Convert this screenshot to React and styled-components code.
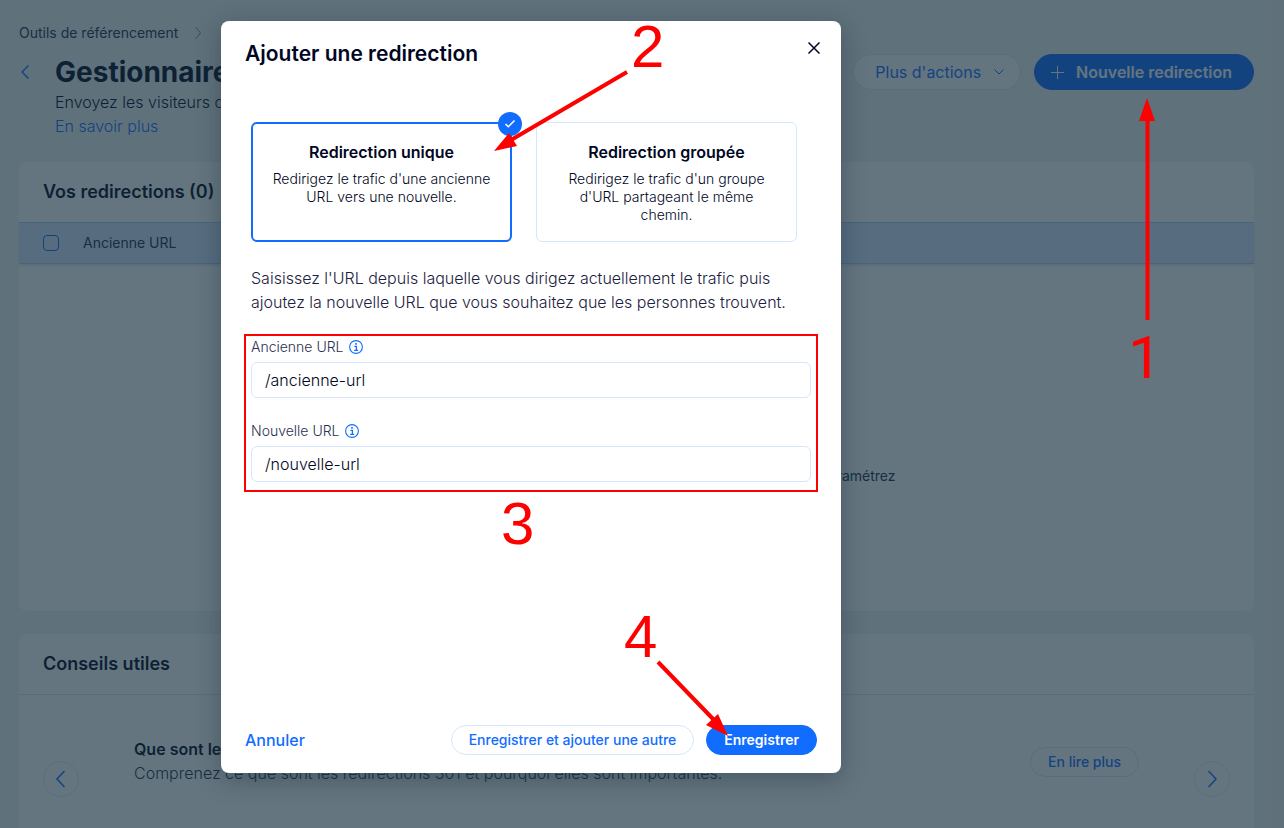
import React from "react";
import styled, { createGlobalStyle, css } from "styled-components";

const GlobalStyle = createGlobalStyle`
  *, *::before, *::after { box-sizing: border-box; }
  body {
    margin: 0;
    background: #eef2f4;
    color: #000624;
    font-family: Inter, "Liberation Sans", sans-serif;
    font-size: 16px;
    font-weight: 300;
    line-height: 24px;
  }
  h1, h2, h3, p { margin: 0; }
  button, input { font: inherit; color: inherit; }
  a { text-decoration: none; }
  svg { display: block; flex: none; }
`;

const Screen = styled.div`
  position: relative;
  min-height: 100vh;
  overflow: hidden;
`;

const Page = styled.main`
  height: 100vh;
  overflow: hidden;
  padding: 24px 30px 0 19px;
`;

const Breadcrumbs = styled.nav`
  display: flex;
  align-items: center;
  gap: 16px;
  font-size: 14px;
  font-weight: 400;
  line-height: 18px;
  color: #20304f;
  a { color: inherit; }
  svg { color: #7a92a5; }
`;

const PageHeader = styled.header`
  display: flex;
  align-items: flex-start;
  margin: 12px 0 24px;
`;

const BackButton = styled.button`
  width: 36px;
  height: 36px;
  padding: 0;
  border: 0;
  background: none;
  color: #116dff;
`;

const Heading = styled.div`
  flex: 1;
  a { color: #116dff; }
`;

const PageTitle = styled.h1`
  font-size: 28px;
  line-height: 36px;
  font-weight: 700;
`;

const Actions = styled.div`
  display: flex;
  gap: 13px;
`;

const looks = {
  primary: css`
    background: #116dff;
    border-color: #116dff;
    color: #fff;
    font-weight: 600;
  `,
  secondary: css`
    background: #fff;
    border-color: #d6e6fe;
    color: #116dff;
    font-weight: 500;
  `,
};

const Pill = styled.button`
  display: inline-flex;
  align-items: center;
  justify-content: center;
  height: 30px;
  padding: 0 17px;
  border: 1px solid;
  border-radius: 18px;
  font-size: 14px;
  white-space: nowrap;
  ${(p) => looks[p.$look]}
`;

const HeaderPill = styled(Pill)`
  gap: 12px;
  height: 36px;
  padding: ${(p) => (p.$look === "primary" ? "0 21px 0 15px" : "0 15px 0 21px")};
  font-size: 16px;
  font-weight: ${(p) => (p.$look === "primary" ? 600 : 400)};
`;

const Card = styled.section`
  min-height: ${(p) => p.$height}px;
  margin-bottom: 23px;
  border-radius: 8px;
  background: #fff;
`;

const CardTitle = styled.h2`
  padding: 18px 24px;
  border-bottom: ${(p) => (p.$ruled ? "1px solid #dfe5eb" : "0")};
  font-size: 18px;
  line-height: 24px;
  font-weight: 600;
`;

const Table = styled.table`
  width: 100%;
  border-collapse: collapse;
  box-shadow: 0 2px 2px rgba(22, 45, 61, 0.1);
  th {
    height: 41px;
    padding: 0;
    border: solid #a8caff;
    border-width: 1px 0;
    background: #d6e6fe;
    color: #20304f;
    font-size: 14px;
    font-weight: 400;
    text-align: left;
  }
  th:first-child { width: 64px; padding-left: 24px; }
`;

const Checkbox = styled.input`
  display: block;
  appearance: none;
  width: 16px;
  height: 16px;
  margin: 0;
  border: 1px solid #116dff;
  border-radius: 4px;
`;

const EmptyState = styled.p`
  width: 518px;
  margin: 200px auto 0;
  color: #20304f;
  font-size: 14px;
  font-weight: 400;
  text-align: right;
`;

const Tip = styled.div`
  display: flex;
  align-items: flex-start;
  padding: 42px 24px 0;
`;

const TipText = styled.div`
  flex: 1;
  padding-left: 55px;
  color: #20304f;
  h3 {
    color: #000624;
    font-size: 16px;
    line-height: 24px;
    font-weight: 600;
  }
`;

const TipAction = styled.div`
  padding: 10px 55px 0 0;
`;

const RoundButton = styled.button`
  display: grid;
  place-items: center;
  width: 36px;
  height: 36px;
  margin-top: 24px;
  padding: 0;
  border: 1px solid #dcebf8;
  border-radius: 50%;
  background: none;
  color: #116dff;
`;

const Overlay = styled.div`
  position: absolute;
  inset: 0;
  padding: 21px 24px 0 221px;
  background: rgba(22, 45, 61, 0.66);
`;

const Dialog = styled.section`
  position: relative;
  display: flex;
  flex-direction: column;
  width: 100%;
  max-width: 620px;
  min-height: 752px;
  border-radius: 8px;
  background: #fff;
  box-shadow: 0 6px 24px rgba(22, 45, 61, 0.4);
`;

const DialogHeader = styled.header`
  display: flex;
  justify-content: space-between;
  padding: 18px 18px 0 24px;
  h2 {
    padding-top: 3px;
    font-size: 21px;
    line-height: 24px;
    font-weight: 600;
  }
`;

const CloseButton = styled.button`
  width: 18px;
  height: 18px;
  padding: 0;
  border: 0;
  background: none;
`;

const DialogBody = styled.div`
  flex: 1;
  padding: 56px 23px 0;
`;

const Choices = styled.div`
  display: grid;
  grid-template-columns: 1fr 1fr;
  gap: 24px;
  padding: 0 21px 0 7px;
`;

const Choice = styled.button`
  position: relative;
  display: flex;
  flex-direction: column;
  align-items: center;
  gap: 6px;
  height: 120px;
  padding: ${(p) => (p.$selected ? "16px 15px" : "17px 16px")};
  border: ${(p) => (p.$selected ? "2px solid #116dff" : "1px solid #d6e6fe")};
  border-radius: 6px;
  background: none;
  color: #000624;
  font-size: 14px;
  line-height: 18px;
  strong {
    font-size: 16px;
    line-height: 24px;
    font-weight: 600;
  }
`;

const SelectedBadge = styled.span`
  position: absolute;
  top: -12px;
  right: -12px;
  display: grid;
  place-items: center;
  width: 24px;
  height: 24px;
  border-radius: 50%;
  background: #116dff;
`;

const Intro = styled.p`
  padding: 24px 7px 20px;
  color: #1c2140;
`;

const Fields = styled.div`
  display: flex;
  flex-direction: column;
  gap: 24px;
  padding: 2px 5px 8px;
  border: 2px solid #f00;
`;

const LabelRow = styled.div`
  display: flex;
  align-items: center;
  gap: 6px;
  padding-bottom: 6px;
  color: #2b3050;
  font-size: 14px;
  line-height: 18px;
  svg { color: #116dff; }
`;

const TextInput = styled.input`
  display: block;
  width: 100%;
  height: 36px;
  padding: 0 13px;
  border: 1px solid #d6e6fe;
  border-radius: 6px;
  background: #fff;
  color: #000624;
`;

const DialogFooter = styled.footer`
  display: flex;
  align-items: center;
  gap: 12px;
  padding: 0 24px 18px;
`;

const CancelButton = styled.button`
  margin-right: auto;
  padding: 0;
  border: 0;
  background: none;
  color: #116dff;
  font-weight: 500;
`;

const Marks = styled.svg`
  position: absolute;
  overflow: visible;
  pointer-events: none;
`;

const DialogMarks = styled(Marks)`
  top: 0;
  left: 0;
`;

const PageMarks = styled(Marks)`
  top: 98px;
  right: 108px;
`;

const Digit = styled.text`
  fill: #f00;
  font-family: ${(p) => (p.$plain ? "Roboto" : '"Liberation Sans"')}, sans-serif;
  font-size: 60px;
  font-weight: 400;
`;

function Stroke({ size, width = 1, d }) {
  return (
    <svg width={size} height={size} viewBox={`0 0 ${size} ${size}`} fill="none" stroke="currentColor" strokeWidth={width} aria-hidden="true">
      <path d={d} />
    </svg>
  );
}

function InfoIcon() {
  return (
    <svg width="14" height="14" viewBox="0 0 14 14" fill="none" stroke="currentColor" aria-hidden="true">
      <circle cx="7" cy="7" r="6.4" strokeWidth="1.1" />
      <path d="M5.4 6.3h2v4M5.2 10.4h3.9" strokeWidth="1.3" />
      <path d="M6.2 3.9h1.6" strokeWidth="1.7" />
    </svg>
  );
}

function Field({ id, label, value }) {
  return (
    <div>
      <LabelRow>
        <label htmlFor={id}>{label}</label>
        <InfoIcon />
      </LabelRow>
      <TextInput id={id} type="text" defaultValue={value} />
    </div>
  );
}

export default function App() {
  return (
    <Screen>
      <GlobalStyle />
      <Page>
        <Breadcrumbs>
          <a href="#outils">Outils de référencement</a>
          <Stroke size={12} d="M1.500 0l5 6-5 6" />
          <span>Gestionnaire</span>
        </Breadcrumbs>
        <PageHeader>
          <BackButton aria-label="Retour">
            <Stroke size={16} width={1.4} d="M9.5 1.5L3 8l6.500 6.500" />
          </BackButton>
          <Heading>
            <PageTitle>Gestionnaire</PageTitle>
            <p>Envoyez les visiteurs d</p>
            <a href="#aide">En savoir plus</a>
          </Heading>
          <Actions>
            <HeaderPill $look="secondary">
              Plus d'actions
              <Stroke size={12} d="M1.500 3.500L6 8l4.500-4.500" />
            </HeaderPill>
            <HeaderPill $look="primary">
              <Stroke size={14} d="M7.500 1v13M1 7.500h13" />
              Nouvelle redirection
            </HeaderPill>
          </Actions>
        </PageHeader>

        <Card $height={449}>
          <CardTitle>Vos redirections (0)</CardTitle>
          <Table>
            <thead>
              <tr>
                <th><Checkbox type="checkbox" aria-label="Tout" /></th>
                <th>Ancienne URL</th>
              </tr>
            </thead>
          </Table>
          <EmptyState>paramétrez</EmptyState>
        </Card>

        <Card $height={240}>
          <CardTitle $ruled>Conseils utiles</CardTitle>
          <Tip>
            <RoundButton aria-label="Précédent">
              <Stroke size={18} width={1.5} d="M12.500 1L5 9l7.500 8" />
            </RoundButton>
            <TipText>
              <h3>Que sont les</h3>
              <p>Comprenez ce que sont les redirections 301 et pourquoi elles sont importantes.</p>
            </TipText>
            <TipAction>
              <Pill $look="secondary">En lire plus</Pill>
            </TipAction>
            <RoundButton aria-label="Suivant">
              <Stroke size={18} width={1.5} d="M5.500 1L13 9l-7.500 8" />
            </RoundButton>
          </Tip>
        </Card>
      </Page>

      <Overlay>
        <Dialog role="dialog" aria-labelledby="dialog-title">
          <DialogHeader>
            <h2 id="dialog-title">Ajouter une redirection</h2>
            <CloseButton aria-label="Fermer">
              <Stroke size={18} width={1.5} d="M3.500 3.500l11 11M14.500 3.500l-11 11" />
            </CloseButton>
          </DialogHeader>
          <DialogBody>
            <Choices>
              <Choice $selected aria-pressed="true">
                <strong>Redirection unique</strong>
                <span>Redirigez le trafic d'une ancienne URL vers une nouvelle.</span>
                <SelectedBadge>
                  <svg width="12" height="12" viewBox="0 0 12 12" fill="none" stroke="#fff" strokeWidth="1.500" aria-hidden="true">
                    <path d="M1.500 6l2.800 2.800L10.500 2.500" />
                  </svg>
                </SelectedBadge>
              </Choice>
              <Choice aria-pressed="false">
                <strong>Redirection groupée</strong>
                <span>Redirigez le trafic d'un groupe d'URL partageant le même chemin.</span>
              </Choice>
            </Choices>
            <Intro>
              Saisissez l'URL depuis laquelle vous dirigez actuellement le trafic puis ajoutez la nouvelle URL que vous souhaitez que les personnes trouvent.
            </Intro>
            <Fields>
              <Field id="old-url" label="Ancienne URL" value="/ancienne-url" />
              <Field id="new-url" label="Nouvelle URL" value="/nouvelle-url" />
            </Fields>
          </DialogBody>
          <DialogFooter>
            <CancelButton>Annuler</CancelButton>
            <Pill $look="secondary">Enregistrer et ajouter une autre</Pill>
            <Pill $look="primary">Enregistrer</Pill>
          </DialogFooter>
          <DialogMarks width="620" height="752" viewBox="0 0 620 752">
            <g stroke="#f00" strokeWidth="4">
              <path d="M406 51L290 119M437 641L494 700" />
            </g>
            <path fill="#f00" d="M273 130l15-18 8 13zM507 715l-22-11 12-11z" />
            <Digit x="410" y="46">2</Digit>
            <Digit x="280" y="523">3</Digit>
            <Digit x="403" y="636">4</Digit>
          </DialogMarks>
        </Dialog>
      </Overlay>
      <PageMarks width="52" height="300" viewBox="0 0 52 300">
        <path d="M23.500 222V20" stroke="#f00" strokeWidth="4" />
        <path d="M23 0l8 23H15z" fill="#f00" />
        <Digit $plain x="4" y="280">1</Digit>
      </PageMarks>
    </Screen>
  );
}
